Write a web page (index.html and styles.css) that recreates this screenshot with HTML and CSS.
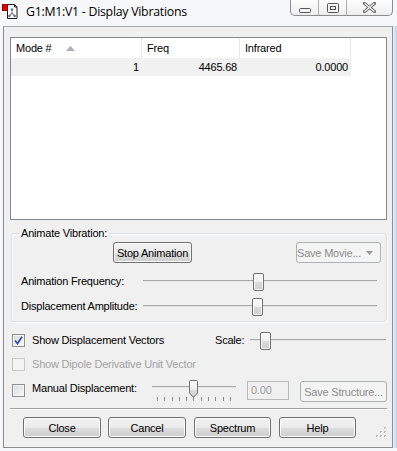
FILE: index.html
```html
<!DOCTYPE html>
<html>
<head>
<meta charset="utf-8">
<title>G1:M1:V1 - Display Vibrations</title>
<link rel="stylesheet" href="styles.css">
</head>
<body>
<div class="window">
  <div class="titlebar">
    <svg class="app-icon" width="16" height="16" viewBox="0 0 16 16">
      <path d="M5.5 1.5 h7 l2.5 2.5 v11.5 h-9.5 z" fill="#fff" stroke="#1a1a1a"/>
      <path d="M12.5 1.5 v2.5 h2.5" fill="none" stroke="#1a1a1a"/>
      <path d="M10 6.5 v3.5 M10 10 l-2.6 3 M10 10 l2.6 3" stroke="#8a8a8a" stroke-width="1.2" fill="none"/>
      <circle cx="10" cy="6.5" r="1.3" fill="#777"/>
      <circle cx="7.3" cy="13" r="1.3" fill="#777"/>
      <circle cx="12.7" cy="13" r="1.3" fill="#777"/>
      <rect x="0.5" y="1.5" width="5" height="6" fill="#e40000" stroke="#9a0000"/>
    </svg>
    <span class="title">G1:M1:V1 - Display Vibrations</span>
    <div class="caption">
      <span class="cap cap-min">
        <svg width="12" height="5" viewBox="0 0 12 5"><rect x="0.5" y="0.5" width="11" height="4" rx="1" fill="#f4f4f4" stroke="#555"/></svg>
      </span>
      <span class="cap cap-max">
        <svg width="12" height="10" viewBox="0 0 12 10"><rect x="0.5" y="0.5" width="11" height="9" rx="1" fill="#f4f4f4" stroke="#555"/><rect x="3.5" y="3.5" width="5" height="3" fill="none" stroke="#555"/></svg>
      </span>
      <span class="cap cap-close">
        <svg width="13" height="11" viewBox="0 0 13 11"><path d="M1.5 1.5 L11.5 9.5 M11.5 1.5 L1.5 9.5" stroke="#6a6a6a" stroke-width="3.2" stroke-linecap="square"/><path d="M1.5 1.5 L11.5 9.5 M11.5 1.5 L1.5 9.5" stroke="#f4f4f4" stroke-width="1.3"/></svg>
      </span>
    </div>
  </div>
  <div class="frame-row">
    <div class="client">
      <div class="list">
        <div class="lv-header">
          <div class="lv-cell c1">Mode #<svg class="sort" width="9" height="5" viewBox="0 0 9 5"><path d="M0 5 L4.5 0 L9 5 Z" fill="#a7b0b8"/></svg></div>
          <div class="lv-cell c2">Freq</div>
          <div class="lv-cell c3">Infrared</div>
          <div class="lv-cell c4"></div>
        </div>
        <div class="lv-row">
          <div class="lv-cell c1 num">1</div>
          <div class="lv-cell c2 num">4465.68</div>
          <div class="lv-cell c3 num">0.0000</div>
        </div>
      </div>

      <fieldset class="group">
        <legend>Animate Vibration:</legend>
        <div class="anim-buttons">
          <button class="btn btn-stop">Stop Animation</button>
          <button class="btn btn-movie disabled">Save Movie...<svg class="drop" width="7" height="4" viewBox="0 0 7 4"><path d="M0 0 H7 L3.5 4 Z" fill="#9a9a9a"/></svg></button>
        </div>
        <div class="slider-row first">
          <span class="slider-label">Animation Frequency:</span>
          <div class="track wide"><span class="thumb" style="left:110px"></span></div>
        </div>
        <div class="slider-row second">
          <span class="slider-label">Displacement Amplitude:</span>
          <div class="track wide"><span class="thumb" style="left:109px"></span></div>
        </div>
      </fieldset>

      <div class="opt-row row-vectors">
        <span class="cb checked"><svg width="9" height="9" viewBox="0 0 9 9"><path d="M1 4.5 L3.5 7.5 L8 0.8" fill="none" stroke="#3a4fa0" stroke-width="1.8"/></svg></span>
        <span class="opt-label vec-label">Show Displacement Vectors</span>
        <span class="scale-label">Scale:</span>
        <div class="track scale"><span class="thumb" style="left:10px"></span></div>
      </div>

      <div class="opt-row row-dipole">
        <span class="cb disabled"></span>
        <span class="opt-label disabled-text">Show Dipole Derivative Unit Vector</span>
      </div>

      <div class="manual-row">
        <span class="cb"></span>
        <span class="opt-label manual-label">Manual Displacement:</span>
        <div class="mslider">
          <div class="track mtrack">
            <svg class="pthumb" style="left:37px" width="9" height="18" viewBox="0 0 9 18"><defs><linearGradient id="pg" x1="0" y1="0" x2="0" y2="1"><stop offset="0" stop-color="#fafafa"/><stop offset="0.55" stop-color="#ececec"/><stop offset="0.56" stop-color="#dcdcdc"/><stop offset="1" stop-color="#d0d0d0"/></linearGradient></defs><path d="M0.5 1.5 Q0.5 0.5 1.5 0.5 H7.5 Q8.5 0.5 8.5 1.5 V13 L4.5 17.3 L0.5 13 Z" fill="url(#pg)" stroke="#707070"/></svg>
          </div>
          <div class="ticks">
            <i></i><i></i><i></i><i></i><i></i><i></i><i></i><i></i><i></i><i></i><i></i>
          </div>
        </div>
        <span class="textbox">0.00</span>
        <button class="btn btn-struct disabled">Save Structure...</button>
      </div>

      <div class="separator"></div>

      <div class="footer">
        <button class="btn fb w78">Close</button>
        <button class="btn fb w78 g7">Cancel</button>
        <button class="btn fb w77 g8">Spectrum</button>
        <button class="btn fb w77 g8">Help</button>
        <svg class="grip" width="11" height="11" viewBox="0 0 11 11">
          <g fill="#b8b8b8">
            <rect x="8" y="0" width="2" height="2"/>
            <rect x="8" y="4" width="2" height="2"/><rect x="4" y="4" width="2" height="2"/>
            <rect x="8" y="8" width="2" height="2"/><rect x="4" y="8" width="2" height="2"/><rect x="0" y="8" width="2" height="2"/>
          </g>
          <g fill="#fff">
            <rect x="9" y="1" width="1" height="1"/>
            <rect x="9" y="5" width="1" height="1"/><rect x="5" y="5" width="1" height="1"/>
            <rect x="9" y="9" width="1" height="1"/><rect x="5" y="9" width="1" height="1"/><rect x="1" y="9" width="1" height="1"/>
          </g>
        </svg>
      </div>
    </div>
    <div class="glass"></div>
  </div>
</div>
</body>
</html>
```
FILE: styles.css
```css
* { box-sizing: border-box; }
html, body { margin: 0; padding: 0; }
body {
  width: 397px;
  height: 451px;
  overflow: hidden;
  background: #fbfbfb;
  font-family: "Liberation Sans", Arial, sans-serif;
  font-size: 11px;
  letter-spacing: -0.2px;
  color: #000;
}

.window {
  width: 397px;
  height: 451px;
  display: flex;
  flex-direction: column;
  background: #f6f7f8;
}

/* ---------- title bar ---------- */
.titlebar {
  height: 26px;
  flex: none;
  display: flex;
  align-items: flex-start;
}
.app-icon { flex: none; margin: 3px 0 0 2px; }
.title {
  margin: 3px 0 0 8px;
  font-family: "Open Sans", "Noto Sans", sans-serif;
  font-size: 12.3px;
  line-height: 18px;
  letter-spacing: -0.25px;
  color: #000;
  white-space: nowrap;
}
.caption {
  margin-left: auto;
  margin-right: 4px;
  height: 16px;
  display: flex;
  border: 1px solid #8c8d8e;
  border-top: none;
  border-radius: 0 0 5px 5px;
  background: linear-gradient(#fdfdfd, #eeeeee);
  overflow: hidden;
}
.cap { display: flex; justify-content: center; height: 15px; }
.cap-min { width: 28px; border-right: 1px solid #b0b0b0; align-items: flex-end; padding-bottom: 2px; }
.cap-max { width: 28px; border-right: 1px solid #b0b0b0; align-items: center; }
.cap-close { width: 45px; align-items: center; }

/* ---------- frame ---------- */
.frame-row { display: flex; height: 422px; flex: none; }
.client {
  margin-left: 3px;
  width: 390px;
  height: 422px;
  border: 1px solid #8e8e8e;
  border-top-color: #a6a6a6;
  background: #f0f0f0;
  display: flex;
  flex-direction: column;
}
.glass {
  width: 4px;
  background: linear-gradient(to right, #eef3f9, #bcd0ea);
}

/* ---------- list view ---------- */
.list {
  margin: 10px 0 0 6px;
  width: 377px;
  height: 183px;
  border: 1px solid #828790;
  background: #fff;
  flex: none;
}
.lv-header { display: flex; height: 20px; background: #fff; }
.lv-row { display: flex; height: 18px; }
.lv-cell { flex: none; white-space: nowrap; }
.lv-header .lv-cell {
  line-height: 20px;
  padding-left: 5px;
  border-right: 1px solid #e5e7ea;
  display: flex;
  align-items: center;
}
.lv-header .c4 { border-right: none; flex: 1; }
.c1 { width: 131px; }
.c2 { width: 98px; }
.c3 { width: 111px; }
.sort { margin: 1px 0 0 14px; }
.lv-row .lv-cell {
  background: #f1f1f1;
  line-height: 18px;
  text-align: right;
  padding-right: 3px;
}

/* ---------- group box ---------- */
.group {
  margin: 7px 0 0 7px;
  width: 376px;
  min-width: 0;
  border: 1px solid #d5dfe5;
  border-radius: 3px;
  padding: 2px 5px 5px 9px;
  box-shadow: inset 1px 1px 0 #fff, 1px 1px 0 #fff;
  flex: none;
}
.group legend {
  padding: 0 2px;
  margin-left: -2px;
  line-height: 13px;
}
.anim-buttons { display: flex; height: 21px; }
.btn-stop { margin-left: 92px; width: 79px; }
.btn-movie {
  margin-left: auto;
  width: 85px;
  display: flex;
  align-items: center;
  padding-left: 5px;
}
.drop { margin-left: 5px; }

.slider-row { display: flex; align-items: center; height: 20px; }
.slider-row.first { margin-top: 8px; }
.slider-row.second { margin-top: 5px; }
.slider-label { width: 122px; flex: none; white-space: nowrap; }

.track {
  position: relative;
  height: 2px;
  border-top: 1px solid #a9a9a9;
  background: #e4e4e4;
  flex: none;
}
.track.wide { width: 234px; }
.thumb {
  position: absolute;
  top: -8px;
  width: 11px;
  height: 18px;
  border: 1px solid #707070;
  border-radius: 2px;
  background: linear-gradient(#fbfbfb, #eeeeee 50%, #dadada 51%, #d0d0d0);
  box-shadow: inset 0 0 0 1px rgba(255,255,255,0.8);
}

/* ---------- option rows ---------- */
.opt-row {
  display: flex;
  align-items: center;
  height: 20px;
  padding-left: 8px;
  flex: none;
}
.row-vectors { margin-top: 8px; }
.row-dipole { margin-top: 4px; }
.cb {
  width: 13px;
  height: 13px;
  flex: none;
  border: 1px solid #8e8f8f;
  background: linear-gradient(135deg, #d4d8dd, #fbfbfb);
  box-shadow: inset 0 0 0 1px #f6f6f6;
  display: flex;
  align-items: center;
  justify-content: center;
}
.cb.disabled {
  border-color: #c8c8c8;
  background: #f4f4f4;
  box-shadow: none;
}
.opt-label { margin-left: 7px; white-space: nowrap; }
.vec-label { width: 183px; flex: none; }
.scale-label { width: 35px; flex: none; }
.track.scale { width: 136px; }
.disabled-text { color: #a3a3a3; }

.manual-row {
  display: flex;
  align-items: flex-start;
  height: 23px;
  padding-left: 8px;
  margin-top: 5px;
  flex: none;
}
.manual-row .cb { margin-top: 5px; }
.manual-label { width: 120px; flex: none; margin-top: 3px; line-height: 13px; }
.mslider { width: 84px; flex: none; display: flex; flex-direction: column; }
.track.mtrack { width: 84px; margin-top: 7px; }
.pthumb { position: absolute; top: -7px; }
.ticks {
  margin: 9px 5px 0 5px;
  display: flex;
  justify-content: space-between;
}
.ticks i { display: block; width: 1px; height: 4px; background: #8a8a8a; }
.textbox {
  margin: 2px 0 0 11px;
  width: 42px;
  height: 19px;
  border: 1px solid #b8babc;
  background: #f0f0f0;
  color: #9c9c9c;
  line-height: 17px;
  padding-left: 3px;
  flex: none;
}
.btn-struct { margin: 2px 0 0 11px; width: 87px; height: 20px; }

.separator {
  margin: 6px 0 0 6px;
  width: 377px;
  height: 2px;
  border-top: 1px solid #a0a0a0;
  border-bottom: 1px solid #fff;
  flex: none;
}

/* ---------- footer ---------- */
.footer {
  margin-top: 7px;
  display: flex;
  height: 21px;
  padding: 0 5px 0 19px;
  flex: none;
}
.w78 { width: 78px; }
.w77 { width: 77px; }
.g7 { margin-left: 7px; }
.g8 { margin-left: 8px; }
.grip { margin-left: auto; align-self: flex-end; }

/* ---------- buttons ---------- */
.btn {
  height: 21px;
  padding: 0;
  border: 1px solid #707070;
  border-radius: 3px;
  background: linear-gradient(#f2f2f2 0%, #ebebeb 50%, #dddddd 51%, #cfcfcf 100%);
  box-shadow: inset 0 0 0 1px #fcfcfc;
  font-family: "Liberation Sans", Arial, sans-serif;
  font-size: 11px;
  letter-spacing: -0.2px;
  color: #000;
  white-space: nowrap;
  flex: none;
}
.btn.disabled {
  border-color: #adb2b5;
  background: #f4f4f4;
  box-shadow: none;
  color: #8d8d8d;
}
```
